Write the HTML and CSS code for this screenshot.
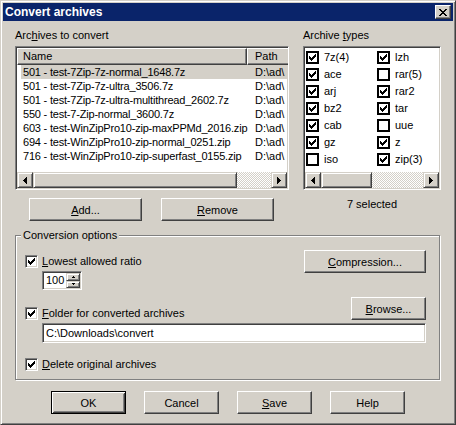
FILE: index.html
```html
<!DOCTYPE html>
<html lang="en">

<head>
    <meta charset="UTF-8">
    <title>Convert archives</title>
    <link rel="stylesheet" href="styles.css">
</head>

<body>
    <svg class="svg-defs" width="0" height="0">
        <defs>
            <path id="tick" d="M0 2h1v1h1v1h1v-1h1v-1h1v-1h1v-1h1v3h-1v1h-1v1h-1v1h-1v1h-1v-1h-1v-1h-1v-1h-1z" />
            <path id="arrow-left" d="M0 3h1v1h-1zM1 2h1v3h-1zM2 1h1v5h-1zM3 0h1v7h-1z" />
            <path id="arrow-right" d="M0 0h1v7h-1zM1 1h1v5h-1zM2 2h1v3h-1zM3 3h1v1h-1z" />
        </defs>
    </svg>

    <div class="window">
        <div class="titlebar">
            <span class="title">Convert archives</span>
            <span class="close-btn">
                <svg width="8" height="7" viewBox="0 0 8 7" shape-rendering="crispEdges">
                    <path d="M0 0h2v1h-2zM6 0h2v1h-2zM1 1h2v1h-2zM5 1h2v1h-2zM2 2h4v1h-4zM3 3h2v1h-2zM2 4h4v1h-4zM1 5h2v1h-2zM5 5h2v1h-2zM0 6h2v1h-2zM6 6h2v1h-2z" />
                </svg>
            </span>
        </div>

        <div class="client">
            <div class="top-row">
                <div class="archives-col">
                    <div class="caption">Arc<u>h</u>ives to convert</div>
                    <div class="listview sunken">
                        <div class="lv-header">
                            <div class="hd hd-name">Name</div>
                            <div class="hd hd-path">Path</div>
                        </div>
                        <div class="lv-rows">
                            <div class="lv-row selected"><span class="c-name">501 - test-7Zip-7z-normal_1648.7z</span><span class="c-path">D:\ad\</span></div>
                            <div class="lv-row"><span class="c-name">501 - test-7Zip-7z-ultra_3506.7z</span><span class="c-path">D:\ad\</span></div>
                            <div class="lv-row"><span class="c-name">501 - test-7Zip-7z-ultra-multithread_2602.7z</span><span class="c-path">D:\ad\</span></div>
                            <div class="lv-row"><span class="c-name">550 - test-7-Zip-normal_3600.7z</span><span class="c-path">D:\ad\</span></div>
                            <div class="lv-row"><span class="c-name">603 - test-WinZipPro10-zip-maxPPMd_2016.zip</span><span class="c-path">D:\ad\</span></div>
                            <div class="lv-row"><span class="c-name">694 - test-WinZipPro10-zip-normal_0251.zip</span><span class="c-path">D:\ad\</span></div>
                            <div class="lv-row"><span class="c-name">716 - test-WinZipPro10-zip-superfast_0155.zip</span><span class="c-path">D:\ad\</span></div>
                        </div>
                        <div class="hscroll">
                            <span class="sb-btn"><svg width="4" height="7" viewBox="0 0 4 7"><use href="#arrow-left" /></svg></span>
                            <span class="sb-thumb thumb-files"></span>
                            <span class="sb-track"></span>
                            <span class="sb-btn"><svg width="4" height="7" viewBox="0 0 4 7"><use href="#arrow-right" /></svg></span>
                        </div>
                    </div>
                    <div class="list-buttons">
                        <button class="btn btn-wide"><u>A</u>dd...</button>
                        <button class="btn btn-wide"><u>R</u>emove</button>
                    </div>
                </div>

                <div class="types-col">
                    <div class="caption">Archive <u>t</u>ypes</div>
                    <div class="typebox sunken">
                        <div class="type-grid">
                            <label class="type-item"><span class="chk flat"><svg width="7" height="7" viewBox="0 0 7 7"><use href="#tick" /></svg></span>7z(4)</label>
                            <label class="type-item"><span class="chk flat"><svg width="7" height="7" viewBox="0 0 7 7"><use href="#tick" /></svg></span>lzh</label>
                            <label class="type-item"><span class="chk flat"><svg width="7" height="7" viewBox="0 0 7 7"><use href="#tick" /></svg></span>ace</label>
                            <label class="type-item"><span class="chk flat"></span>rar(5)</label>
                            <label class="type-item"><span class="chk flat"><svg width="7" height="7" viewBox="0 0 7 7"><use href="#tick" /></svg></span>arj</label>
                            <label class="type-item"><span class="chk flat"><svg width="7" height="7" viewBox="0 0 7 7"><use href="#tick" /></svg></span>rar2</label>
                            <label class="type-item"><span class="chk flat"><svg width="7" height="7" viewBox="0 0 7 7"><use href="#tick" /></svg></span>bz2</label>
                            <label class="type-item"><span class="chk flat"><svg width="7" height="7" viewBox="0 0 7 7"><use href="#tick" /></svg></span>tar</label>
                            <label class="type-item"><span class="chk flat"><svg width="7" height="7" viewBox="0 0 7 7"><use href="#tick" /></svg></span>cab</label>
                            <label class="type-item"><span class="chk flat"></span>uue</label>
                            <label class="type-item"><span class="chk flat"><svg width="7" height="7" viewBox="0 0 7 7"><use href="#tick" /></svg></span>gz</label>
                            <label class="type-item"><span class="chk flat"><svg width="7" height="7" viewBox="0 0 7 7"><use href="#tick" /></svg></span>z</label>
                            <label class="type-item"><span class="chk flat"></span>iso</label>
                            <label class="type-item"><span class="chk flat"><svg width="7" height="7" viewBox="0 0 7 7"><use href="#tick" /></svg></span>zip(3)</label>
                        </div>
                        <div class="hscroll">
                            <span class="sb-btn"><svg width="4" height="7" viewBox="0 0 4 7"><use href="#arrow-left" /></svg></span>
                            <span class="sb-thumb thumb-types"></span>
                            <span class="sb-track"></span>
                            <span class="sb-btn"><svg width="4" height="7" viewBox="0 0 4 7"><use href="#arrow-right" /></svg></span>
                        </div>
                    </div>
                    <div class="selected-count">7 selected</div>
                </div>
            </div>

            <fieldset class="group">
                <legend>Conversion options</legend>

                <div class="opt-row">
                    <label class="check-label"><span class="chk"><svg width="7" height="7" viewBox="0 0 7 7"><use href="#tick" /></svg></span><span><u>L</u>owest allowed ratio</span></label>
                    <button class="btn btn-compression"><u>C</u>ompression...</button>
                </div>
                <div class="spinner sunken">
                    <span class="spin-value">100</span>
                    <span class="spin-btns">
                        <span class="spin-btn"><svg width="3" height="2" viewBox="0 0 3 2"><path d="M1 0h1v1h-1zM0 1h3v1h-3z" /></svg></span>
                        <span class="spin-btn"><svg width="3" height="2" viewBox="0 0 3 2"><path d="M0 0h3v1h-3zM1 1h1v1h-1z" /></svg></span>
                    </span>
                </div>

                <div class="opt-row folder-row">
                    <label class="check-label"><span class="chk"><svg width="7" height="7" viewBox="0 0 7 7"><use href="#tick" /></svg></span><span><u>F</u>older for converted archives</span></label>
                    <button class="btn btn-browse"><u>B</u>rowse...</button>
                </div>
                <div class="edit sunken">C:\Downloads\convert</div>

                <label class="check-label delete-row"><span class="chk"><svg width="7" height="7" viewBox="0 0 7 7"><use href="#tick" /></svg></span><span><u>D</u>elete original archives</span></label>
            </fieldset>

            <div class="dialog-buttons">
                <button class="btn btn-dialog btn-default">OK</button>
                <button class="btn btn-dialog">Cancel</button>
                <button class="btn btn-dialog"><u>S</u>ave</button>
                <button class="btn btn-dialog">Help</button>
            </div>
        </div>
    </div>
</body>

</html>
```

FILE: styles.css
```css
* {
    box-sizing: border-box;
}

body {
    margin: 0;
    font-family: "Liberation Sans", Arial, sans-serif;
    font-size: 11px;
    color: #000;
    background-color: #d4d0c8;
}

.svg-defs {
    display: none;
}

svg {
    display: block;
    shape-rendering: crispEdges;
    fill: #000;
}

u {
    text-decoration-thickness: 1px;
    text-underline-offset: 1px;
}

/* Window frame */
.window {
    width: 456px;
    height: 425px;
    padding: 2px;
    background-color: #d4d0c8;
    border: 1px solid;
    border-color: #d4d0c8 #404040 #404040 #d4d0c8;
    box-shadow: inset 1px 1px #fff, inset -1px -1px #808080;
}

.titlebar {
    height: 18px;
    padding: 0 2px;
    background-color: #0a246a;
    display: flex;
    align-items: center;
    justify-content: space-between;
}

.title {
    color: #fff;
    font-weight: bold;
    font-size: 12px;
    line-height: 18px;
}

.close-btn {
    width: 16px;
    height: 14px;
    display: flex;
    align-items: center;
    justify-content: center;
    background-color: #d4d0c8;
    border: 1px solid;
    border-color: #fff #404040 #404040 #fff;
    box-shadow: inset -1px -1px #808080;
}

/* 3D helpers */
.sunken {
    border: 1px solid;
    border-color: #808080 #fff #fff #808080;
    box-shadow: inset 1px 1px #404040, inset -1px -1px #d4d0c8;
    background-color: #fff;
}

.btn {
    height: 23px;
    padding: 0;
    font: inherit;
    color: #000;
    background-color: #d4d0c8;
    border: 1px solid;
    border-color: #fff #404040 #404040 #fff;
    box-shadow: inset -1px -1px #808080, inset 1px 1px #d4d0c8;
}

.client {
    padding: 8px 12px 0 12px;
}

.caption {
    height: 13px;
    line-height: 13px;
    margin-bottom: 4px;
}

.top-row {
    display: flex;
    gap: 14px;
}

.archives-col {
    width: 274px;
}

.types-col {
    width: 138px;
}

/* File list */
.listview {
    height: 144px;
    padding: 1px;
    display: flex;
    flex-direction: column;
    overflow: hidden;
}

.lv-header {
    display: flex;
    height: 17px;
    flex-shrink: 0;
}

.hd {
    height: 17px;
    flex-shrink: 0;
    line-height: 15px;
    background-color: #d4d0c8;
    border: 1px solid;
    border-color: #fff #404040 #404040 #fff;
    box-shadow: inset -1px -1px #808080;
    white-space: nowrap;
}

.hd-name {
    width: 230px;
    padding-left: 5px;
}

.hd-path {
    width: 100px;
    padding-left: 7px;
}

.lv-rows {
    flex: 1;
}

.lv-row {
    display: flex;
    height: 14px;
    line-height: 14px;
    margin-left: 4px;
    white-space: nowrap;
}

.lv-row.selected {
    background-color: #d4d0c8;
}

.c-name {
    width: 226px;
    padding-left: 2px;
    flex-shrink: 0;
    letter-spacing: -0.2px;
}

.c-path {
    padding-left: 8px;
}

/* Scroll bars */
.hscroll {
    display: flex;
    height: 16px;
    flex-shrink: 0;
}

.sb-btn,
.sb-thumb {
    height: 16px;
    background-color: #d4d0c8;
    border: 1px solid;
    border-color: #d4d0c8 #404040 #404040 #d4d0c8;
    box-shadow: inset 1px 1px #fff, inset -1px -1px #808080;
}

.sb-btn {
    width: 16px;
    flex-shrink: 0;
    display: flex;
    align-items: center;
    justify-content: center;
}

.thumb-files {
    width: 204px;
}

.thumb-types {
    width: 51px;
}

.sb-track {
    flex: 1;
    background: repeating-conic-gradient(#fff 0 25%, #d4d0c8 0 50%) 0 0 / 2px 2px;
}

.list-buttons {
    display: flex;
    gap: 19px;
    margin-top: 8px;
    padding-left: 14px;
}

.btn-wide {
    width: 113px;
}

/* Archive types */
.typebox {
    height: 144px;
    padding: 1px;
    display: flex;
    flex-direction: column;
}

.type-grid {
    flex: 1;
    display: grid;
    grid-template-columns: 71px 1fr;
    grid-auto-rows: 13px;
    row-gap: 4px;
    padding: 3px 0 0 1px;
}

.type-item {
    display: flex;
    align-items: center;
    gap: 5px;
    line-height: 13px;
}

.chk {
    width: 13px;
    height: 13px;
    flex-shrink: 0;
    padding: 2px;
    background-color: #fff;
    border: 1px solid;
    border-color: #808080 #fff #fff #808080;
    box-shadow: inset 1px 1px #404040, inset -1px -1px #d4d0c8;
}

.chk.flat {
    padding: 1px;
    border: 2px solid #000;
    box-shadow: none;
}

.selected-count {
    margin-top: 8px;
    line-height: 13px;
    text-align: center;
}

/* Conversion options */
.group {
    width: 425px;
    margin: 8px 0 0 0;
    padding: 8px 13px 8px 9px;
    min-inline-size: 0;
    border: 1px solid #808080;
    box-shadow: inset 1px 1px #fff, 1px 1px #fff;
}

.group legend {
    margin-left: -4px;
    padding: 0 2px;
    line-height: 13px;
    background-color: #d4d0c8;
}

.opt-row {
    display: flex;
    align-items: center;
    justify-content: space-between;
    height: 23px;
}

.check-label {
    display: flex;
    align-items: center;
    gap: 4px;
    line-height: 13px;
}

.btn-compression {
    width: 122px;
}

.spinner {
    width: 40px;
    height: 19px;
    margin: -2px 0 0 17px;
    padding: 1px;
    display: flex;
}

.spin-value {
    flex: 1;
    padding-left: 2px;
    line-height: 15px;
}

.spin-btns {
    width: 14px;
    display: flex;
    flex-direction: column;
}

.spin-btn {
    flex: 1;
    display: flex;
    align-items: center;
    justify-content: center;
    background-color: #d4d0c8;
    border: 1px solid;
    border-color: #d4d0c8 #404040 #404040 #d4d0c8;
    box-shadow: inset 1px 1px #fff, inset -1px -1px #808080;
}

.folder-row {
    margin-top: 7px;
    align-items: flex-end;
}

.btn-browse {
    width: 75px;
}

.edit {
    height: 20px;
    margin: 3px 0 0 17px;
    padding: 0 3px;
    line-height: 18px;
}

.delete-row {
    margin-top: 15px;
}

/* Dialog buttons */
.dialog-buttons {
    display: flex;
    justify-content: center;
    gap: 18px;
    margin-top: 11px;
}

.btn-dialog {
    width: 75px;
}

.btn-default {
    border: 1px solid #000;
    box-shadow: inset 1px 1px #fff, inset -1px -1px #404040, inset 2px 2px #d4d0c8, inset -2px -2px #808080;
}
```
